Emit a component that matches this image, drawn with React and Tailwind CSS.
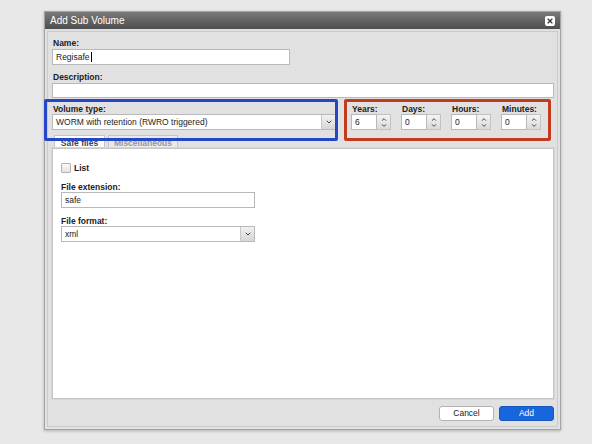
import { ChevronDown, ChevronUp, X } from 'lucide-react';

const SPINS = [
    { label: 'Years:', value: '6' },
    { label: 'Days:', value: '0' },
    { label: 'Hours:', value: '0' },
    { label: 'Minutes:', value: '0' },
];

function Label({ children, className = '' }) {
    return <div className={`h-[10px] leading-[10px] text-[8.5px] font-bold text-[#222] ${className}`}>{children}</div>;
}

function Field({ children, className = '' }) {
    return (
        <div className={`flex items-center bg-white border border-[#b9b9b9] px-[3px] text-[8.5px] text-[#222] ${className}`}>
            {children}
        </div>
    );
}

function Select({ value, className = '' }) {
    return (
        <div className={`flex bg-white border border-[#b9b9b9] text-[8.5px] text-[#222] ${className}`}>
            <div className="flex-1 flex items-center px-[3px]">{value}</div>
            <div className="w-[14px] flex items-center justify-center bg-gradient-to-b from-[#f2f2f2] to-[#d6d6d6] border-l border-[#c8c8c8]">
                <ChevronDown className="w-[8px] h-[8px] text-[#444]" strokeWidth={3} />
            </div>
        </div>
    );
}

function Spinner({ label, value }) {
    return (
        <div className="w-[40px] flex flex-col">
            <Label className="pl-[1px]">{label}</Label>
            <div className="flex h-[16px]">
                <Field className="w-[26px] h-[16px]">{value}</Field>
                <div className="w-[14px] flex flex-col items-center justify-center bg-gradient-to-b from-[#f4f4f4] to-[#dadada] border border-l-0 border-[#c3c3c3]">
                    <ChevronUp className="w-[10px] h-[7px] text-[#333] -mb-[1px]" strokeWidth={3} />
                    <ChevronDown className="w-[10px] h-[7px] text-[#333]" strokeWidth={3} />
                </div>
            </div>
        </div>
    );
}

export default function App() {
    return (
        <div className="w-[592px] h-[444px] bg-[#e8e8e8] pt-[11px] pl-[44px] font-['Liberation_Sans',Arial,sans-serif]">
            <div className="w-[517px] h-[419px] flex flex-col border border-[#a4a4a4] bg-[#e1e1e1] shadow-[0_1px_3px_rgba(0,0,0,0.25)]">
                <div className="h-[17px] flex items-center justify-between px-[5px] bg-gradient-to-b from-[#7a7a7a] to-[#4e4e4e]">
                    <span className="text-[10px] text-white leading-none">Add Sub Volume</span>
                    <div className="w-[10px] h-[10px] bg-white rounded-[2px] flex items-center justify-center">
                        <X className="w-[8px] h-[8px] text-[#333]" strokeWidth={3.5} />
                    </div>
                </div>

                <div className="flex-1 flex p-[2px]">
                    <div className="flex-1 flex flex-col border border-[#cbcbcb] pl-[4px] pr-[3px] pt-[6px]">
                        <Label className="pl-[1px]">Name:</Label>
                        <Field className="mt-[1px] w-[238px] h-[16px]">
                            Regisafe
                            <span className="w-px h-[10px] bg-black ml-px" />
                        </Field>

                        <Label className="mt-[7px] pl-[1px]">Description:</Label>
                        <Field className="h-[15px] mt-[1px]" />

                        <div className="relative flex mt-[6px]">
                            <div className="w-[284px] flex flex-col">
                                <Label className="pl-[1px]">Volume type:</Label>
                                <Select value="WORM with retention (RWRO triggered)" className="h-[16px]" />
                            </div>
                            <div className="flex gap-[10px] ml-[15px]">
                                {SPINS.map((s) => (
                                    <Spinner key={s.label} label={s.label} value={s.value} />
                                ))}
                            </div>
                            <div className="absolute left-[-8px] top-[-5px] w-[294px] h-[42px] border-[3px] border-[#2646c8] rounded-[2px]" />
                            <div className="absolute left-[292px] top-[-5px] w-[207px] h-[42px] border-[3px] border-[#c23a1f] rounded-[2px]" />
                        </div>

                        <div className="flex gap-[3px] mt-[5px] pl-[2px] h-[13px]">
                            <div className="w-[51px] border border-b-0 border-[#c5c5c5] bg-white text-[8.5px] leading-[9px] font-bold text-[#444] flex items-end justify-center">
                                Safe files
                            </div>
                            <div className="w-[70px] border border-b-0 border-[#c5c5c5] bg-[#e9e9e9] text-[8.5px] leading-[9px] font-bold text-[#999] flex items-end justify-center">
                                Miscellaneous
                            </div>
                        </div>

                        <div className="flex-1 flex flex-col bg-white border border-[#c5c5c5] outline outline-1 outline-[#d6d6d6] pl-[8px] pt-[14px]">
                            <div className="flex items-center gap-[3px] h-[10px]">
                                <div className="w-[10px] h-[10px] border border-[#b0b0b0] bg-gradient-to-b from-[#fafafa] to-[#e3e3e3] rounded-[1px]" />
                                <span className="text-[8.5px] leading-[10px] font-bold text-[#222]">List</span>
                            </div>
                            <Label className="mt-[9px]">File extension:</Label>
                            <Field className="w-[194px] h-[16px]">safe</Field>
                            <Label className="mt-[8px]">File format:</Label>
                            <Select value="xml" className="w-[194px] h-[16px]" />
                        </div>

                        <div className="h-[27px] flex items-start justify-end gap-[5px] pt-[7px]">
                            <div className="w-[55px] h-[15px] flex items-center justify-center bg-white border border-[#b3b3b3] rounded-[3px] text-[8.5px] text-[#222]">
                                Cancel
                            </div>
                            <div className="w-[55px] h-[15px] flex items-center justify-center bg-[#1866dc] border border-[#1456bd] rounded-[3px] text-[8.5px] text-white">
                                Add
                            </div>
                        </div>
                    </div>
                </div>
            </div>
        </div>
    );
}
